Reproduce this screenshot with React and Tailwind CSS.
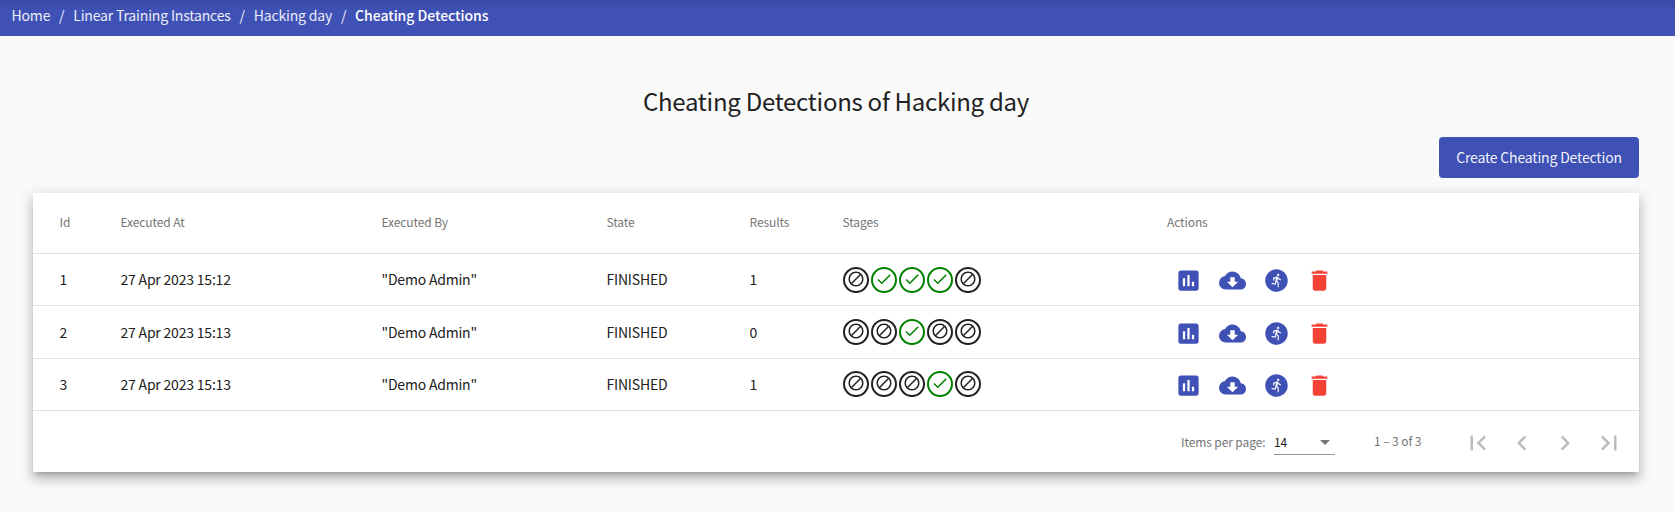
import { MdBlock, MdDone, MdAssessment, MdCloudDownload, MdRunCircle, MdDelete, MdFirstPage, MdChevronLeft, MdChevronRight, MdLastPage, MdArrowDropDown } from "react-icons/md";

const crumbs = ["Home", "Linear Training Instances", "Hacking day"];

const runs = [
  { id: 1, at: "27 Apr 2023 15:12", by: '"Demo Admin"', state: "FINISHED", results: 1, stages: [0, 1, 1, 1, 0], height: "h-[52px]", nudge: "pb-0", actions: "pt-[2px]" },
  { id: 2, at: "27 Apr 2023 15:13", by: '"Demo Admin"', state: "FINISHED", results: 0, stages: [0, 0, 1, 0, 0], height: "h-[53px]", nudge: "pb-px", actions: "pt-[3px]" },
  { id: 3, at: "27 Apr 2023 15:13", by: '"Demo Admin"', state: "FINISHED", results: 1, stages: [0, 0, 0, 1, 0], height: "h-[52px]", nudge: "pb-[2px]", actions: "pt-[2px]" },
];

const columns = "grid grid-cols-[61px_261px_225px_143px_93px_324.5px_1fr] items-center border-b border-[#e0e0e0] pl-[26.5px]";

function Stage({ done }) {
  return (
    <span className={`flex size-[26px] items-center justify-center rounded-full border-2 pb-px ${done ? "border-[#008000] text-[#008000]" : "border-[#212121] text-[#212121]"}`}>
      {done ? <MdDone size={18} /> : <MdBlock size={18} />}
    </span>
  );
}

function Actions({ offset }) {
  return (
    <div className={`flex gap-[16.8px] pl-2 text-[#3f51b5] ${offset}`}>
      <MdAssessment size={27} />
      <MdCloudDownload size={27} />
      <MdRunCircle size={27} />
      <MdDelete size={27} className="text-[#f44336]" />
    </div>
  );
}

export default function App() {
  return (
    <div className="h-[512px] overflow-hidden bg-[#fafafa] font-['Noto_Sans_CJK_SC','Noto_Sans',sans-serif] text-[#212121]">
      <nav className="flex h-9 items-center bg-[#3f51b5] bg-linear-to-b from-[#3949a3] to-[#3f51b5] to-30% pb-[7px] pl-[11.5px] text-[14px] leading-5 tracking-[-0.17px] whitespace-pre text-white">
        {crumbs.map((c) => (
          <span key={c} className="flex text-white/90">
            {c}
            <span className="w-[23px] text-center">/</span>
          </span>
        ))}
        <span className="font-medium tracking-[-0.05px]">Cheating Detections</span>
      </nav>
      <main className="pr-9 pl-[33px]">
        <h1 className="pt-[49px] text-center text-[24px] leading-8 tracking-[-0.27px]">Cheating Detections of Hacking day</h1>
        <div className="flex justify-end pt-5">
          <button className="h-[41px] w-[200px] rounded bg-[#3f51b5] text-[14px] tracking-[-0.17px] text-white/95">Create Cheating Detection</button>
        </div>
        <section className="mt-[15px] h-[279px] bg-white shadow-[0_5px_5px_-3px_rgba(0,0,0,0.2),0_8px_10px_1px_rgba(0,0,0,0.14),0_3px_14px_2px_rgba(0,0,0,0.12)]">
          <div className={`${columns} h-[61px] pb-[2px] text-[12px] tracking-[-0.1px] text-[#757575]`}>
            <span>Id</span>
            <span>Executed At</span>
            <span>Executed By</span>
            <span>State</span>
            <span>Results</span>
            <span>Stages</span>
            <span>Actions</span>
          </div>
          {runs.map((r) => (
            <div key={r.id} className={`${columns} ${r.height} text-[14px] tracking-[-0.2px]`}>
              <span>{r.id}</span>
              <span>{r.at}</span>
              <span>{r.by}</span>
              <span>{r.state}</span>
              <span>{r.results}</span>
              <span className={`flex gap-[2px] ${r.nudge}`}>
                {r.stages.map((s, i) => <Stage key={i} done={s === 1} />)}
              </span>
              <Actions offset={r.actions} />
            </div>
          ))}
          <div className="flex h-[61px] items-center text-[12px] tracking-[-0.1px] text-[#757575]">
            <span className="ml-[1148px] w-[93px]">Items per page:</span>
            <div className="mt-px flex h-[25px] w-[61px] items-center justify-between border-b border-[#949494] text-[#212121]">
              14
              <MdArrowDropDown size={24} className="-mr-[2px] text-[#757575]" />
            </div>
            <span className="ml-[39px] w-[89px] pb-px">1 – 3 of 3</span>
            <div className="flex gap-[13.6px] pt-[3px] text-[#bdbdbd]">
              <MdFirstPage size={30} />
              <MdChevronLeft size={30} />
              <MdChevronRight size={30} />
              <MdLastPage size={30} />
            </div>
          </div>
        </section>
      </main>
    </div>
  );
}
